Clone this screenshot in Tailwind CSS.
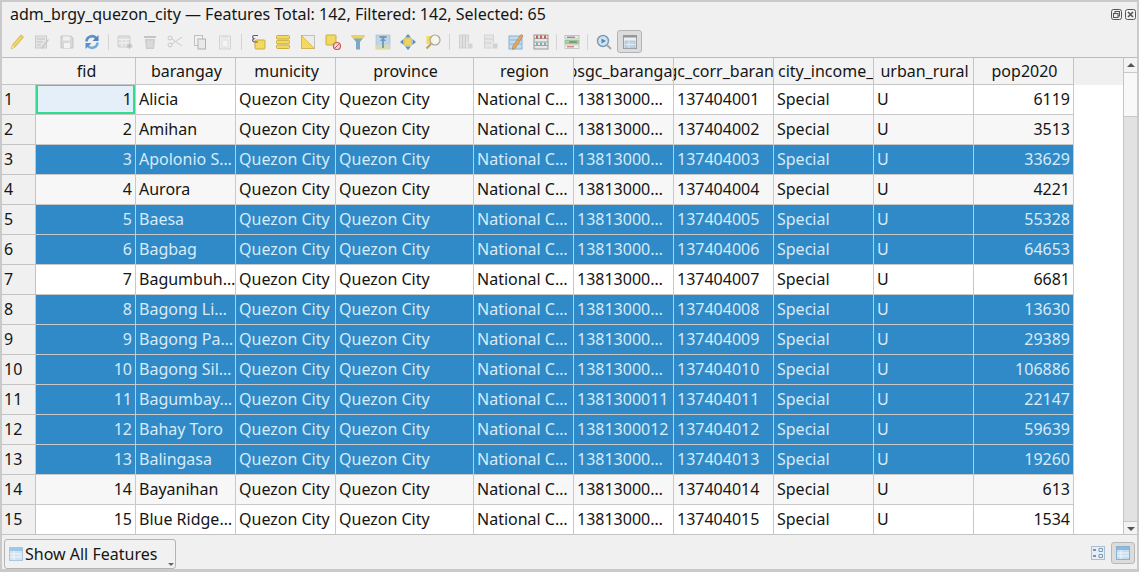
<!doctype html>
<html><head><meta charset="utf-8"><script src="https://cdn.jsdelivr.net/npm/@tailwindcss/browser@4"></script></head>
<body class="m-0">
<div class="w-[1139px] h-[572px] overflow-hidden bg-[#f0f0f0] flex flex-col border-2 border-b-[3px] border-[#cacaca] font-['Noto_Sans',sans-serif] text-[16px] text-[#151515]">
  <div class="h-[24px] flex items-center pl-2 pr-[1px] justify-between shrink-0">
    <span class="leading-[22px]">adm_brgy_quezon_city — Features Total: 142, Filtered: 142, Selected: 65</span>
    <span class="flex gap-[3px]">
      <svg class="w-[11px] h-[11px]" viewBox="0 0 11 11" fill="none" stroke="#555"><rect x=".5" y=".5" width="10" height="10" rx="2"/><rect x="4" y="2.5" width="4.5" height="4.5"/><rect x="2.5" y="4.5" width="4.5" height="4" fill="#f0f0f0"/></svg>
      <svg class="w-[11px] h-[11px]" viewBox="0 0 11 11" fill="none" stroke="#555"><rect x=".5" y=".5" width="10" height="10" rx="2"/><path d="M3 3l5 5M8 3l-5 5" stroke-width="1.6"/></svg>
    </span>
  </div>
  <div class="h-[32px] border-b border-[#bcbcbc] shrink-0 flex items-center pl-[2px] [&>span]:w-[25px] [&>span]:h-[22px] [&>span]:flex [&>span]:items-center [&>span]:justify-center [&>span]:shrink-0 [&>i]:shrink-0 [&>i]:h-[16px] [&>i]:flex [&>i]:justify-center [&_svg]:w-[16px] [&_svg]:h-[16px] [&_svg]:opacity-85">
    <span><svg viewBox="0 0 16 16"><path d="M12 1l2.5 2L6 13l-3.500 2 .8-4z" fill="#f0d048" stroke="#b89a20" stroke-width=".7"/><path d="M3.300 11l-.8 4 3-1.800z" fill="#eee0b0"/></svg></span>
    <span><svg viewBox="0 0 16 16"><rect x="1.500" y="2" width="11" height="12" fill="#e2e2e2" stroke="#c4c4c4"/><path d="M3 5h8M3 8h6M3 11h4" stroke="#bdbdbd"/><path d="M14 5l1 1-6 8-2 1 .5-2z" fill="#c2c2c2"/></svg></span>
    <span><svg viewBox="0 0 16 16"><path d="M2 2h10l2 2v10H2z" fill="#d4d4d4" stroke="#c0c0c0"/><rect x="4" y="2.500" width="7" height="4" fill="#f0f0f0"/><rect x="5" y="9" width="6" height="5" fill="#f4f4f4"/></svg></span>
    <span><svg viewBox="0 0 16 16" fill="none"><path d="M2.500 7.500A5.500 5.500 0 0 1 12.500 4.500" stroke="#3d80c4" stroke-width="2.600"/><path d="M14.500 1v6h-6z" fill="#2f72b8"/><path d="M13.500 8.500A5.500 5.500 0 0 1 3.500 11.500" stroke="#5a9fdc" stroke-width="2.600"/><path d="M1.500 15V9h6z" fill="#3d80c4"/></svg></span>
    <i class="w-[8px]"><b class="w-px h-full bg-[#d4d4d4]"></b></i>
    <span><svg viewBox="0 0 16 16"><rect x="1" y="2" width="12" height="11" rx="1" fill="#dcdcdc" stroke="#c6c6c6"/><path d="M1.500 5.500h11M1.500 9h11M5 5.500V13M9 5.500V13" stroke="#f2f2f2"/><path d="M12.500 9v6M9.500 12h6M10.500 10l4 4M14.500 10l-4 4" stroke="#b4b4b4"/></svg></span>
    <span><svg viewBox="0 0 16 16"><rect x="2" y="2" width="12" height="2" fill="#bdbdbd"/><path d="M3 5h10l-1 10H4z" fill="#c6c6c6"/><path d="M6 6.500v7M8 6.500v7M10 6.500v7" stroke="#e6e6e6"/></svg></span>
    <span><svg viewBox="0 0 16 16" fill="none" stroke="#c4c4c4"><path d="M15 3L5 10M15 12L5 5"/><circle cx="3" cy="4" r="2"/><circle cx="3" cy="11" r="2"/></svg></span>
    <span><svg viewBox="0 0 16 16"><rect x="2.500" y="1.500" width="8" height="10" fill="#f2f2f2" stroke="#b8b8b8"/><rect x="6" y="5" width="7.500" height="10" fill="#e8e8e8" stroke="#a8a8a8"/></svg></span>
    <span><svg viewBox="0 0 16 16"><rect x="2.500" y="2" width="11" height="13" fill="#eeeeee" stroke="#cfcfcf"/><rect x="5.500" y="1" width="5" height="3" fill="#dddddd"/><rect x="5" y="6" width="6" height="7" fill="#f6f6f6" stroke="#dcdcdc"/></svg></span>
    <i class="w-[8px]"><b class="w-px h-full bg-[#d4d4d4]"></b></i>
    <span><svg viewBox="0 0 16 16"><rect x="5" y="6" width="10" height="9" rx="1" fill="#f3d54a" stroke="#c6a21e"/><path d="M8 1.500H4C2.500 1.500 2 4 4 4.800 1.800 5.500 2.500 8 4.500 8H8" fill="none" stroke="#5a3a68" stroke-width="1.200"/></svg></span>
    <span><svg viewBox="0 0 16 16" fill="#f3d54a" stroke="#c6a21e"><rect x="1.500" y="1.500" width="13" height="3.500" rx="1"/><rect x="1.500" y="6.300" width="13" height="3.500" rx="1"/><rect x="1.500" y="11" width="13" height="3.500" rx="1"/></svg></span>
    <span><svg viewBox="0 0 16 16"><rect x="1.500" y="1.500" width="13" height="13" fill="#ececec" stroke="#b8b8b8"/><path d="M1.500 1.500L14.500 14.500H1.500z" fill="#f3d54a" stroke="#c6a21e" stroke-width=".7"/></svg></span>
    <span><svg viewBox="0 0 16 16"><rect x="1" y="1" width="10" height="10" rx="1" fill="#f3d54a" stroke="#c6a21e"/><circle cx="12" cy="12" r="3.500" fill="#f4d8d8" stroke="#cc3a3a" stroke-width="1.200"/><path d="M10 14l4-4" stroke="#cc3a3a"/></svg></span>
    <span><svg viewBox="0 0 16 16"><path d="M1 1.500h14L10 8v7.500H6V8z" fill="#6a9cc0"/><path d="M1 1.500h14L12.500 4.500h-9z" fill="#f0cf40"/></svg></span>
    <span><svg viewBox="0 0 16 16"><rect x="1" y="1" width="14" height="14" fill="#b4d2e8" stroke="#8aa8c0" stroke-width=".5"/><rect x="1" y="11" width="14" height="4" fill="#ddd69a"/><path d="M8 14V4M4.500 3h7" stroke="#5f8aa8" stroke-width="1.800"/><path d="M5 7l3-3.500L11 7z" fill="#5f8aa8"/></svg></span>
    <span><svg viewBox="0 0 16 16"><rect x="4.500" y="4.500" width="7" height="7" fill="#f0cf40" stroke="#b89a20" stroke-width=".5"/><path d="M8 0l3 3.500H5zM8 16l-3-3.500h6zM0 8l3.500-3v6zM16 8l-3.500-3v6z" fill="#3f7fb0"/></svg></span>
    <span><svg viewBox="0 0 16 16"><rect x="1.500" y="2" width="7" height="8" fill="#f3d54a"/><circle cx="10" cy="6" r="5" fill="#fafafa" fill-opacity=".8" stroke="#9a9a80" stroke-width="1.200"/><path d="M6 10l-4.500 4.500" stroke="#b49a30" stroke-width="2.200"/></svg></span>
    <i class="w-[8px]"><b class="w-px h-full bg-[#d4d4d4]"></b></i>
    <span><svg viewBox="0 0 16 16"><rect x="1.500" y="1" width="9" height="13" fill="#dedede" stroke="#cccccc"/><path d="M4.500 1v13M7.500 1v13" stroke="#c6c6c6"/><rect x="9" y="9" width="6" height="6" fill="#d0d0d0" stroke="#efefef"/></svg></span>
    <span><svg viewBox="0 0 16 16"><rect x="1.500" y="1" width="9" height="13" fill="#e4e4e4" stroke="#d0d0d0"/><path d="M1.500 5h9M1.500 9h9" stroke="#cccccc"/><rect x="9" y="9" width="6" height="6" fill="#cfcfcf" stroke="#efefef"/></svg></span>
    <span><svg viewBox="0 0 16 16"><rect x="1" y="2" width="13" height="13" fill="#bcd8f0" stroke="#7ba6cc"/><path d="M1.500 6h12M1.500 10h12" stroke="#7ba6cc"/><path d="M13 .500l2 1.200L7.500 14l-3 1.500.3-3.300z" fill="#ef9a3c" stroke="#7a5a30" stroke-width=".5"/></svg></span>
    <span><svg viewBox="0 0 16 16"><rect x="1" y="1" width="14" height="14" fill="#eae6da" stroke="#8a8a84"/><path d="M1 4.500h14M1 8h14M1 11.500h14" stroke="#8a9a9a"/><path d="M4 1.500v3M8 1.500v3M12 1.500v3" stroke="#c83c3c" stroke-width="2"/><path d="M4 8.500v3M8 8.500v3M12 8.500v3" stroke="#6aa0c8" stroke-width="2"/></svg></span>
    <i class="w-[6px]"><b class="w-px h-full bg-[#d4d4d4]"></b></i>
    <span><svg viewBox="0 0 16 16"><rect x="1" y="1.500" width="14" height="3.500" fill="#e8e8e8" stroke="#a8a8a8" stroke-width=".7"/><path d="M3 3.200h8" stroke="#555"/><rect x="1" y="6.300" width="14" height="3.500" fill="#9ccf92" stroke="#7aaf70" stroke-width=".7"/><path d="M5 8h8" stroke="#2d5a28"/><rect x="1" y="11" width="14" height="3.500" fill="#f2f2f2" stroke="#b0b0b0" stroke-width=".7"/><path d="M3 12.800h7" stroke="#cc3a3a"/></svg></span>
    <i class="w-[7px]"><b class="w-px h-full bg-[#d4d4d4]"></b></i>
    <span><svg viewBox="0 0 16 16"><circle cx="7" cy="7" r="5.500" fill="#cfe2f2" stroke="#6b8fab" stroke-width="1.500"/><path d="M5.500 4.500l4.500 2.500-4.500 2.500z" fill="#2f78b8"/><path d="M11 11l4 4" stroke="#9a9a9a" stroke-width="2"/></svg></span>
    <span class="rounded-[3px] bg-[#dcdcdc] border border-[#b4b4b4] ml-[1px] !h-[23px]"><svg viewBox="0 0 16 16"><rect x="1.500" y="1.500" width="13" height="13" fill="#f2f2f2" stroke="#909090"/><rect x="1.500" y="1.500" width="13" height="2" fill="#8a8a8a"/><rect x="3" y="7" width="10" height="7" fill="#b8d4ea" stroke="#8ab0d0" stroke-width=".6"/><path d="M3 10.500h10M7 7v7" stroke="#f0f6fb" stroke-width=".7"/></svg></span>
  </div>
  <div class="flex h-[477px] shrink-0 min-h-0">
    <div class="w-[1121px] bg-white shrink-0 flex flex-col">
      <div class="h-[27px] shrink-0 bg-[#f0f0f0] flex leading-[26px] [&>div]:h-[27px] [&>div]:border-b [&>div]:border-r [&>div]:border-[#c4c4c4] [&>div]:bg-[#f3f3f3] [&>div]:overflow-hidden [&>div]:whitespace-nowrap [&>div]:flex [&>div]:justify-center [&>div]:shrink-0 [&>div]:pl-[2px]">
        <div class="w-[34px] !border-r-0"></div>
        <div class="w-[100px]">fid</div>
        <div class="w-[100px]">barangay</div>
        <div class="w-[100px]">municity</div>
        <div class="w-[138px]">province</div>
        <div class="w-[100px]">region</div>
        <div class="w-[100px]"><span class="ml-[-1px]">psgc_barangay</span></div>
        <div class="w-[100px] !justify-start"><span class="ml-[-26px]">psgc_corr_barangay</span></div>
        <div class="w-[100px] !justify-start"><span class="ml-[2px]">city_income_class</span></div>
        <div class="w-[100px]">urban_rural</div>
        <div class="w-[100px]">pop2020</div>
      </div>
      <table class="table-fixed border-separate border-spacing-0 w-[1072px] leading-[29px] [&_td]:h-[30px] [&_td]:p-0 [&_td]:pl-[3px] [&_td]:pr-[3px] [&_td]:border-r [&_td]:border-b [&_td]:border-[#c9c9c9] [&_td]:overflow-hidden [&_td]:whitespace-nowrap [&_th]:h-[30px] [&_th]:p-0 [&_th]:pl-[2px] [&_th]:font-normal [&_th]:text-left [&_th]:text-[#151515] [&_th]:border-r [&_th]:border-b [&_th]:border-[#c4c4c4] [&_th]:bg-[#f0f0f0] [&_td:nth-child(2)]:text-right [&_td:nth-child(11)]:text-right">
        <colgroup><col class="w-[34px]"><col class="w-[100px]"><col class="w-[100px]"><col class="w-[100px]"><col class="w-[138px]"><col class="w-[100px]"><col class="w-[100px]"><col class="w-[100px]"><col class="w-[100px]"><col class="w-[100px]"><col class="w-[100px]"></colgroup>
        <tbody>
        <tr class="bg-white"><th>1</th><td class="relative bg-[#e4eff9]">1<b class="absolute inset-0 -top-px border-2 border-[#2fdd8e] pointer-events-none"></b></td><td>Alicia</td><td>Quezon City</td><td>Quezon City</td><td>National C…</td><td>13813000…</td><td>137404001</td><td>Special</td><td>U</td><td>6119</td></tr>
        <tr class="bg-[#f7f7f7]"><th>2</th><td>2</td><td>Amihan</td><td>Quezon City</td><td>Quezon City</td><td>National C…</td><td>13813000…</td><td>137404002</td><td>Special</td><td>U</td><td>3513</td></tr>
        <tr class="bg-[#2f8ac7] text-[#d8ebf8]"><th>3</th><td>3</td><td>Apolonio S…</td><td>Quezon City</td><td>Quezon City</td><td>National C…</td><td>13813000…</td><td>137404003</td><td>Special</td><td>U</td><td>33629</td></tr>
        <tr class="bg-[#f7f7f7]"><th>4</th><td>4</td><td>Aurora</td><td>Quezon City</td><td>Quezon City</td><td>National C…</td><td>13813000…</td><td>137404004</td><td>Special</td><td>U</td><td>4221</td></tr>
        <tr class="bg-[#2f8ac7] text-[#d8ebf8]"><th>5</th><td>5</td><td>Baesa</td><td>Quezon City</td><td>Quezon City</td><td>National C…</td><td>13813000…</td><td>137404005</td><td>Special</td><td>U</td><td>55328</td></tr>
        <tr class="bg-[#2f8ac7] text-[#d8ebf8]"><th>6</th><td>6</td><td>Bagbag</td><td>Quezon City</td><td>Quezon City</td><td>National C…</td><td>13813000…</td><td>137404006</td><td>Special</td><td>U</td><td>64653</td></tr>
        <tr class="bg-white"><th>7</th><td>7</td><td>Bagumbuh…</td><td>Quezon City</td><td>Quezon City</td><td>National C…</td><td>13813000…</td><td>137404007</td><td>Special</td><td>U</td><td>6681</td></tr>
        <tr class="bg-[#2f8ac7] text-[#d8ebf8]"><th>8</th><td>8</td><td>Bagong Li…</td><td>Quezon City</td><td>Quezon City</td><td>National C…</td><td>13813000…</td><td>137404008</td><td>Special</td><td>U</td><td>13630</td></tr>
        <tr class="bg-[#2f8ac7] text-[#d8ebf8]"><th>9</th><td>9</td><td>Bagong Pa…</td><td>Quezon City</td><td>Quezon City</td><td>National C…</td><td>13813000…</td><td>137404009</td><td>Special</td><td>U</td><td>29389</td></tr>
        <tr class="bg-[#2f8ac7] text-[#d8ebf8]"><th>10</th><td>10</td><td>Bagong Sil…</td><td>Quezon City</td><td>Quezon City</td><td>National C…</td><td>13813000…</td><td>137404010</td><td>Special</td><td>U</td><td>106886</td></tr>
        <tr class="bg-[#2f8ac7] text-[#d8ebf8]"><th>11</th><td>11</td><td>Bagumbay…</td><td>Quezon City</td><td>Quezon City</td><td>National C…</td><td>1381300011</td><td>137404011</td><td>Special</td><td>U</td><td>22147</td></tr>
        <tr class="bg-[#2f8ac7] text-[#d8ebf8]"><th>12</th><td>12</td><td>Bahay Toro</td><td>Quezon City</td><td>Quezon City</td><td>National C…</td><td>1381300012</td><td>137404012</td><td>Special</td><td>U</td><td>59639</td></tr>
        <tr class="bg-[#2f8ac7] text-[#d8ebf8]"><th>13</th><td>13</td><td>Balingasa</td><td>Quezon City</td><td>Quezon City</td><td>National C…</td><td>13813000…</td><td>137404013</td><td>Special</td><td>U</td><td>19260</td></tr>
        <tr class="bg-[#f7f7f7]"><th>14</th><td>14</td><td>Bayanihan</td><td>Quezon City</td><td>Quezon City</td><td>National C…</td><td>13813000…</td><td>137404014</td><td>Special</td><td>U</td><td>613</td></tr>
        <tr class="bg-white"><th>15</th><td>15</td><td>Blue Ridge…</td><td>Quezon City</td><td>Quezon City</td><td>National C…</td><td>13813000…</td><td>137404015</td><td>Special</td><td>U</td><td>1534</td></tr>
        </tbody>
      </table>
    </div>
    <div class="w-[14px] shrink-0 border-l border-[#c4c4c4] bg-[#e2e2e2] flex flex-col">
      <div class="h-[15px] bg-[#f3f3f3] border-b border-[#c8c8c8] flex items-center justify-center"><b class="w-0 h-0 border-x-[4px] border-x-transparent border-b-[4px] border-b-[#555]"></b></div>
      <div class="h-[44px] bg-[#f8f8f8] border-b border-[#c8c8c8]"></div>
      <div class="flex-1"></div>
      <div class="h-[14px] bg-[#f3f3f3] border-t border-[#c8c8c8] flex items-center justify-center"><b class="w-0 h-0 border-x-[4px] border-x-transparent border-t-[4px] border-t-[#555]"></b></div>
    </div>
  </div>
  <div class="flex-1 border-t border-[#c4c4c4] flex items-center justify-between pl-[2px] pr-[2px] -mt-px">
    <button class="relative h-[30px] w-[172px] flex items-center gap-[2px] pl-[3px] bg-[#f1f1f1] border border-[#b4b4b4] rounded-[3px] mt-[3px]">
      <svg class="w-[14px] h-[14px] ml-px" viewBox="0 0 14 14"><rect x=".5" y=".5" width="13" height="13" fill="#cfe2f3" stroke="#a8c6de"/><rect x="1" y="1" width="12" height="3" fill="#a0c6e6"/><path d="M1 7h12M1 10h12M5 4v9" stroke="#f2f7fb"/></svg>
      <span class="leading-[20px]">Show All Features</span>
      <b class="absolute right-[1px] bottom-[2px] w-0 h-0 border-x-[3px] border-x-transparent border-t-[3px] border-t-[#666]"></b>
    </button>
    <div class="flex items-center gap-[6px] mt-[1px]">
      <svg class="w-[14px] h-[14px]" viewBox="0 0 14 14" fill="none"><rect x=".5" y=".5" width="13" height="13" fill="#e8eef4" stroke="#a8c0d4"/><path d="M2 4h3M2 10h3" stroke="#4a7aa0" stroke-width="1.400"/><path d="M8 2.500h3.500v3H8zM8 8.500h3.500v3H8z" stroke="#7a9ab4"/></svg>
      <span class="w-[24px] h-[22px] rounded-[3px] bg-[#dcdcdc] border border-[#b8b8b8] flex items-center justify-center"><svg class="w-[14px] h-[14px]" viewBox="0 0 14 14"><rect x=".5" y=".5" width="13" height="13" fill="#c6dcf0" stroke="#8ab0d0"/><rect x="1" y="1" width="12" height="3" fill="#8fbae0"/><path d="M1 7h12M1 10h12M5 4v9" stroke="#f2f7fb"/></svg></span>
    </div>
  </div>
</div>
</body></html>
